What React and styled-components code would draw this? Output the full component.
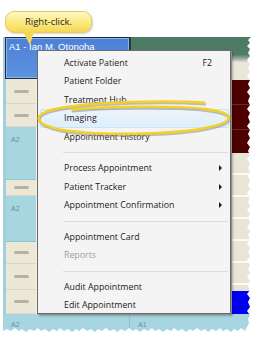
import React from 'react';
import styled, { createGlobalStyle } from 'styled-components';

const GlobalStyle = createGlobalStyle`
  html, body {
    margin: 0;
    padding: 0;
    background: #ffffff;
  }
`;

const menuItems = [
  { label: 'Activate Patient', shortcut: 'F2' },
  { label: 'Patient Folder' },
  { label: 'Treatment Hub' },
  { label: 'Imaging', active: true },
  { label: 'Appointment History' },
  { separator: true },
  { label: 'Process Appointment', submenu: true },
  { label: 'Patient Tracker', submenu: true },
  { label: 'Appointment Confirmation', submenu: true },
  { separator: true },
  { label: 'Appointment Card' },
  { label: 'Reports', disabled: true },
  { separator: true },
  { label: 'Audit Appointment' },
  { label: 'Edit Appointment' },
];

const leftCells = [
  { kind: 'dash', h: 25 },
  { kind: 'dash', h: 23 },
  { kind: 'label', h: 53 },
  { kind: 'dash', h: 16 },
  { kind: 'label', h: 46 },
  { kind: 'dash', h: 22 },
  { kind: 'dash', h: 26 },
  { kind: 'dash', h: 24 },
];

export default function App() {
  return (
    <Page>
      <GlobalStyle />
      <Callout>Right-click.</Callout>
      <Screen>
        <SelectedCell>A1 - Ian M. Otonoha</SelectedCell>
        <RightCol>
          <GreenHeader />
          <Block $h={18} $bg="#e9e7da" />
          <MaroonBlock />
          <RowsBlock />
          <Block $h={23} $bg="#0000f4" />
        </RightCol>
        <LeftCol>
          {leftCells.map((c, i) => (
            <LeftCell key={i} $h={c.h} $kind={c.kind}>
              {c.kind === 'dash' ? <Dash /> : <CellLabel>A2</CellLabel>}
            </LeftCell>
          ))}
        </LeftCol>
        <MidCol />
        <BottomRow>
          <BottomCell $w={127}>
            <CellLabel>A2</CellLabel>
          </BottomCell>
          <BottomCell>
            <CellLabel>A1</CellLabel>
          </BottomCell>
        </BottomRow>

        <Menu>
          {menuItems.map((item, i) =>
            item.separator ? (
              <Separator key={i} />
            ) : (
              <MenuItem key={i} $active={item.active} $disabled={item.disabled}>
                <span>{item.label}</span>
                {item.shortcut && <Shortcut>{item.shortcut}</Shortcut>}
                {item.submenu && <Arrow />}
              </MenuItem>
            )
          )}
        </Menu>

        <TornEdge viewBox="0 0 248 297" preserveAspectRatio="none">
          <path
            d="M248 0 L245 3 L247 6 L244 9 L247 12 L245 16 L247 19 L244 23 L247 27 L245 31 L247 35 L244 39 L247 43 L245 47 L247 51 L244 55 L247 59 L245 64 L247 68 L244 72 L247 76 L245 80 L247 85 L244 89 L247 93 L245 97 L247 101 L244 106 L247 110 L245 114 L247 118 L244 122 L247 127 L245 131 L247 135 L244 139 L247 143 L245 148 L247 152 L244 156 L247 160 L245 165 L247 169 L244 173 L247 177 L245 181 L247 186 L244 190 L247 194 L245 198 L247 202 L244 207 L247 211 L245 215 L247 219 L244 223 L247 228 L245 232 L247 236 L244 240 L247 244 L245 249 L247 253 L244 257 L247 261 L245 265 L247 270 L244 274 L247 278 L245 282 L246 286 L244 290 L242 294 L238 291 L235 294 L231 292 L228 295 L224 292 L220 294 L217 291 L213 294 L209 292 L205 295 L202 292 L198 294 L194 291 L190 294 L187 292 L183 295 L179 292 L175 294 L171 291 L168 294 L164 292 L160 295 L156 292 L152 294 L149 291 L145 294 L141 292 L137 295 L133 292 L130 294 L126 291 L122 294 L118 292 L114 295 L111 292 L107 294 L103 291 L99 294 L95 292 L92 295 L88 292 L84 294 L80 291 L76 294 L73 292 L69 295 L65 292 L61 294 L57 291 L54 294 L50 292 L46 295 L42 292 L38 294 L35 291 L31 294 L27 292 L23 295 L19 292 L16 294 L12 291 L8 294 L4 292 L0 294 L0 297 L248 297 Z"
            fill="#ffffff"
          />
        </TornEdge>
      </Screen>

      <Highlight viewBox="0 0 253 338">
        <g fill="none" strokeLinecap="round">
          <path
            d="M204 102.5 C165 100.5 95 101 58 108.5 C30 114 34 124 60 129.5 C95 136 175 135 210 127 C236 121 236 113 205 109 C175 105.5 110 106 72 109.5"
            stroke="#8a8a8a"
            strokeOpacity="0.55"
            strokeWidth="2.6"
            transform="translate(0.8 1.6)"
          />
          <path
            d="M204 102.5 C165 100.5 95 101 58 108.5 C30 114 34 124 60 129.5 C95 136 175 135 210 127 C236 121 236 113 205 109 C175 105.5 110 106 72 109.5"
            stroke="#f3d125"
            strokeWidth="2.4"
          />
        </g>
      </Highlight>
    </Page>
  );
}

const Page = styled.div`
  position: relative;
  width: 253px;
  height: 338px;
  padding: 11px 0 0 3px;
  box-sizing: border-box;
  font-family: "Open Sans", "Liberation Sans", sans-serif;
`;

const Callout = styled.div`
  position: relative;
  width: 87px;
  height: 22px;
  margin-left: 2px;
  box-sizing: border-box;
  border-radius: 9px;
  border: 1px solid #e3cc62;
  background: linear-gradient(#fff8c4, #fbe77a 60%, #f3d654);
  box-shadow: 1px 1px 2px rgba(0, 0, 0, 0.18);
  color: #262626;
  font-size: 9.5px;
  line-height: 20px;
  text-align: center;
  z-index: 3;

  &::after {
    content: '';
    position: absolute;
    left: 17px;
    top: 20px;
    border-style: solid;
    border-width: 13px 4px 0 7px;
    border-color: #f3d654 transparent transparent transparent;
  }
`;

const Screen = styled.div`
  position: relative;
  margin-top: 4px;
  width: 248px;
  height: 297px;
  display: grid;
  grid-template-columns: 33px 94px 1fr;
  grid-template-rows: 42px 235px 20px;
  background: #edebe0;
`;

const SelectedCell = styled.div`
  grid-column: 1 / 3;
  grid-row: 1;
  box-sizing: border-box;
  margin-left: 2px;
  border: 1px solid #1e2a40;
  box-shadow: inset 0 0 0 1px #8fb4ea;
  background: linear-gradient(#4d80d6, #5b92e2);
  color: #ffffff;
  font-family: "Liberation Sans", sans-serif;
  font-size: 9.5px;
  padding: 3px 0 0 3px;
  white-space: nowrap;
  position: relative;

  &::before {
    content: '';
    position: absolute;
    left: -3px;
    top: -1px;
    bottom: -1px;
    width: 2px;
    background: #9fd0dc;
  }
`;

const RightCol = styled.div`
  grid-column: 3;
  grid-row: 1 / 3;
  display: flex;
  flex-direction: column;
  border-left: 1px solid #2e3e38;
`;

const GreenHeader = styled.div`
  height: 25px;
  background: linear-gradient(#4c7a63, #4f7c66 70%, #9fb2a2 88%, #e0e0d2);
`;

const Block = styled.div`
  height: ${(p) => p.$h}px;
  background: ${(p) => p.$bg};
`;

const MaroonBlock = styled.div`
  height: 73px;
  background: repeating-linear-gradient(#4c0000 0 24px, #6a2a2a 24px 25px);
`;

const RowsBlock = styled.div`
  height: 138px;
  background: repeating-linear-gradient(#e8e5d6 0 20px, #fbfaf4 20px 22px);
`;

const LeftCol = styled.div`
  grid-column: 1;
  grid-row: 2;
  display: flex;
  flex-direction: column;
  border-left: 3px solid #9fd0dc;
`;

const LeftCell = styled.div`
  height: ${(p) => p.$h}px;
  box-sizing: border-box;
  display: flex;
  align-items: ${(p) => (p.$kind === 'dash' ? 'center' : 'flex-start')};
  padding: ${(p) => (p.$kind === 'dash' ? '0 0 0 8px' : '9px 0 0 5px')};
  background: ${(p) => (p.$kind === 'dash' ? '#ebe8d8' : '#a7d6e1')};
  border-bottom: 1px solid ${(p) => (p.$kind === 'dash' ? '#d9d6c6' : '#8fc3cf')};
`;

const Dash = styled.div`
  width: 15px;
  height: 3px;
  border-radius: 2px;
  background: #b5b2a2;
`;

const CellLabel = styled.span`
  font-family: "Liberation Sans", sans-serif;
  font-size: 7px;
  color: #6f8f9c;
`;

const MidCol = styled.div`
  grid-column: 2;
  grid-row: 2;
  background: #f2f0e6;
`;

const BottomRow = styled.div`
  grid-column: 1 / 4;
  grid-row: 3;
  display: flex;
  background: #a7d6e1;
`;

const BottomCell = styled.div`
  width: ${(p) => (p.$w ? `${p.$w}px` : 'auto')};
  flex: ${(p) => (p.$w ? 'none' : '1')};
  box-sizing: border-box;
  padding: 3px 0 0 8px;
  line-height: 9px;
  border-right: ${(p) => (p.$w ? '1px solid #8fc3cf' : 'none')};
`;

const Menu = styled.div`
  position: absolute;
  left: 34px;
  top: 13px;
  width: 194px;
  height: 264px;
  box-sizing: border-box;
  padding-top: 2.5px;
  background: #f4f4f4;
  border: 1px solid #6c6c6c;
  box-shadow: 1px 1px 0 #8c8c8c, 2px 2px 2px rgba(0, 0, 0, 0.25);
  z-index: 2;
`;

const MenuItem = styled.div`
  position: relative;
  height: 18.5px;
  margin: 0 1px 0 2px;
  box-sizing: border-box;
  display: flex;
  align-items: center;
  justify-content: space-between;
  padding: 0 16px 0 23px;
  font-size: 8.8px;
  color: ${(p) => (p.$disabled ? '#9d9d9d' : '#1b1b1b')};
  background: ${(p) => (p.$active ? 'linear-gradient(#eaf4fc, #dfeefa)' : 'transparent')};
  border: 1px solid ${(p) => (p.$active ? '#cde3f4' : 'transparent')};
  border-radius: 2px;
`;

const Shortcut = styled.span`
  font-size: 8.8px;
`;

const Arrow = styled.span`
  position: absolute;
  right: 6px;
  top: 50%;
  margin-top: -3px;
  border-style: solid;
  border-width: 3px 0 3px 3px;
  border-color: transparent transparent transparent #1b1b1b;
`;

const Separator = styled.div`
  height: 13px;
  margin-left: 25px;
  margin-right: 2px;
  position: relative;

  &::after {
    content: '';
    position: absolute;
    left: 0;
    right: 0;
    top: 6px;
    height: 1px;
    background: #dcdcdc;
  }
`;

const TornEdge = styled.svg`
  position: absolute;
  left: 0;
  top: 0;
  width: 248px;
  height: 297px;
  pointer-events: none;
  z-index: 4;
`;

const Highlight = styled.svg`
  position: absolute;
  left: 0;
  top: 0;
  width: 253px;
  height: 338px;
  pointer-events: none;
  z-index: 5;
`;
